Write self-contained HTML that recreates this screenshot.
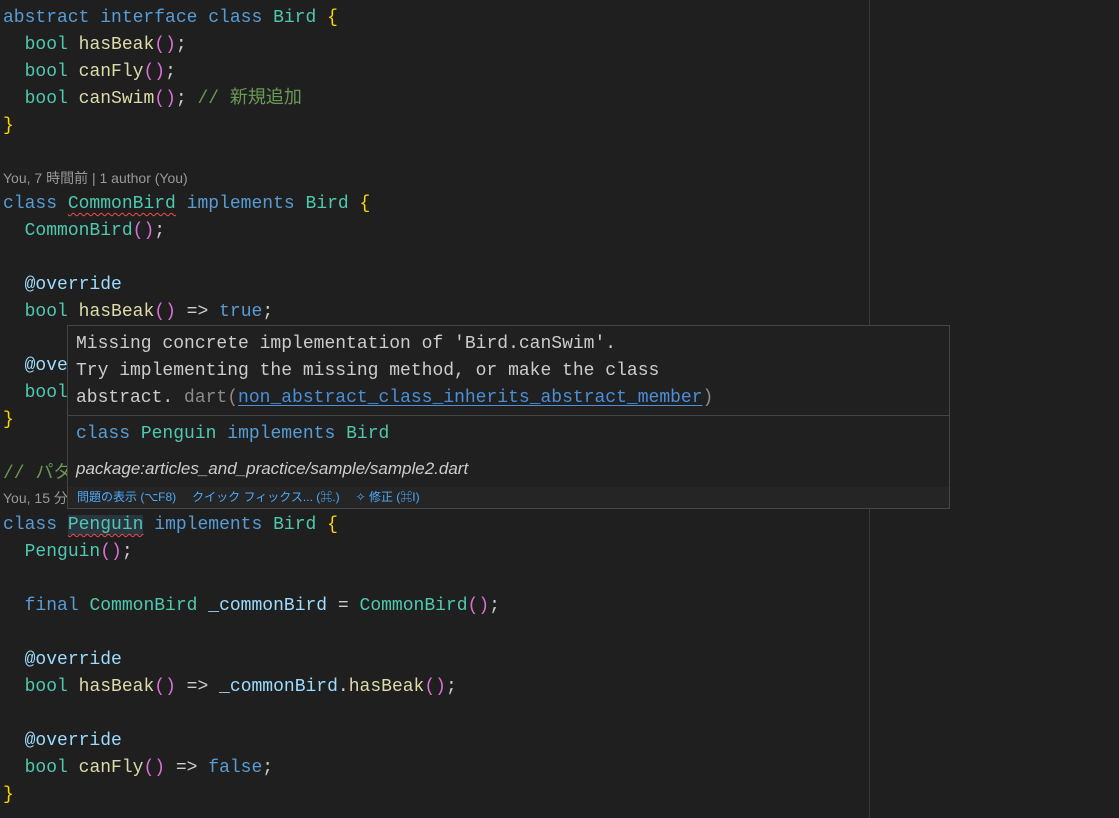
<!DOCTYPE html><html><head><meta charset="utf-8"><style>
body{margin:0;width:1119px;height:818px;background:#1f1f1f;overflow:hidden;position:relative;font-family:"Liberation Mono","Noto Sans CJK JP",monospace;font-size:18px;color:#cccccc}
.l{position:absolute;left:3px;height:27px;line-height:27px;white-space:pre;margin-top:1px}
.cl{position:absolute;left:3px;font-family:"Liberation Sans","Noto Sans CJK JP",sans-serif;font-size:14px;color:#999;white-space:pre}
.k{color:#569cd6}.t{color:#4ec9b0}.f{color:#dcdcaa}.p{color:#da70d6}.b{color:#ffd700}.c{color:#6a9955}.a{color:#9cdcfe}
.sq{text-decoration:underline wavy #f14c4c;text-decoration-thickness:1px;text-underline-offset:4px}
.ruler{position:absolute;left:869px;top:0;width:1px;height:818px;background:#3a3a3a}
.tip{position:absolute;left:67px;top:325px;width:883px;height:184px;background:#202020;border:1px solid #454545;box-sizing:border-box}
.tip .m{position:absolute;left:8px;white-space:pre;color:#cccccc;line-height:27px}
.sep{position:absolute;left:0;right:0;height:1px;background:#454545}
.st{position:absolute;left:0;right:0;top:161px;height:21px;background:#252526;font-family:"Liberation Sans","Noto Sans CJK JP",sans-serif;font-size:12px;color:#4daafc;line-height:21px;white-space:pre}
</style></head><body>
<div class="ruler"></div>
<div class="l" style="top:4px"><span class="k">abstract interface class</span> <span class="t">Bird</span> <span class="b">{</span></div>
<div class="l" style="top:31px">  <span class="t">bool</span> <span class="f">hasBeak</span><span class="p">()</span>;</div>
<div class="l" style="top:58px">  <span class="t">bool</span> <span class="f">canFly</span><span class="p">()</span>;</div>
<div class="l" style="top:85px">  <span class="t">bool</span> <span class="f">canSwim</span><span class="p">()</span>; <span class="c">// 新規追加</span></div>
<div class="l" style="top:112px"><span class="b">}</span></div>
<div class="cl" style="top:168px">You, 7 時間前 | 1 author (You)</div>
<div class="l" style="top:190px"><span class="k">class</span> <span class="t sq">CommonBird</span> <span class="k">implements</span> <span class="t">Bird</span> <span class="b">{</span></div>
<div class="l" style="top:217px">  <span class="t">CommonBird</span><span class="p">()</span>;</div>
<div class="l" style="top:271px">  <span class="a">@override</span></div>
<div class="l" style="top:298px">  <span class="t">bool</span> <span class="f">hasBeak</span><span class="p">()</span> =&gt; <span class="k">true</span>;</div>
<div class="l" style="top:352px">  <span class="a">@override</span></div>
<div class="l" style="top:379px">  <span class="t">bool</span> <span class="f">canFly</span><span class="p">()</span> =&gt; <span class="k">false</span>;</div>
<div class="l" style="top:406px"><span class="b">}</span></div>
<div class="l" style="top:460px"><span class="c">// パターン</span></div>
<div class="cl" style="top:488px">You, 15 分前</div>
<div class="l" style="top:511px"><span class="k">class</span> <span class="t sq" style="background:#2a3540">Penguin</span> <span class="k">implements</span> <span class="t">Bird</span> <span class="b">{</span></div>
<div class="l" style="top:538px">  <span class="t">Penguin</span><span class="p">()</span>;</div>
<div class="l" style="top:592px">  <span class="k">final</span> <span class="t">CommonBird</span> <span class="a">_commonBird</span> = <span class="t">CommonBird</span><span class="p">()</span>;</div>
<div class="l" style="top:646px">  <span class="a">@override</span></div>
<div class="l" style="top:673px">  <span class="t">bool</span> <span class="f">hasBeak</span><span class="p">()</span> =&gt; <span class="a">_commonBird</span>.<span class="f">hasBeak</span><span class="p">()</span>;</div>
<div class="l" style="top:727px">  <span class="a">@override</span></div>
<div class="l" style="top:754px">  <span class="t">bool</span> <span class="f">canFly</span><span class="p">()</span> =&gt; <span class="k">false</span>;</div>
<div class="l" style="top:781px"><span class="b">}</span></div>
<div class="tip">
<div class="m" style="top:5px">Missing concrete implementation of 'Bird.canSwim'.
Try implementing the missing method, or make the class
abstract. <span style="color:#8b8b8b">dart(</span><span style="color:#4a8fd8;text-decoration:underline;text-underline-offset:3px">non_abstract_class_inherits_abstract_member</span><span style="color:#8b8b8b">)</span></div>
<div class="sep" style="top:89px"></div>
<div class="m" style="top:95px"><span class="k">class</span> <span class="t">Penguin</span> <span class="k">implements</span> <span class="t">Bird</span></div>
<div class="m" style="top:129px;font-family:'Liberation Sans',sans-serif;font-style:italic;font-size:17px">package:articles_and_practice/sample/sample2.dart</div>
<div class="st"><span style="margin-left:9px">問題の表示 (⌥F8)</span><span style="margin-left:16px">クイック フィックス... (⌘.)</span><span style="margin-left:16px">✧ 修正 (⌘I)</span></div>
</div>
</body></html>
